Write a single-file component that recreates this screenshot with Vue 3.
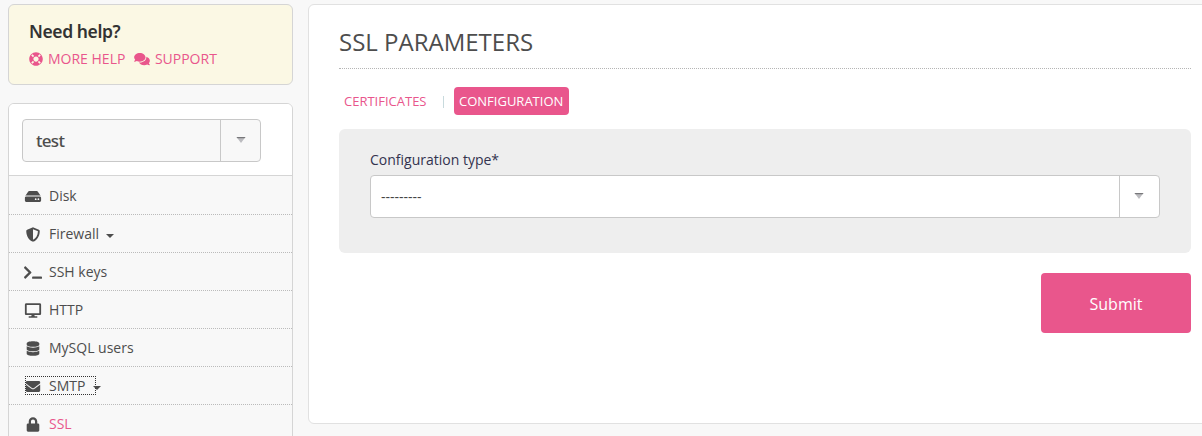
<script setup>
const icons = {
  ring: [512, 'M256 8C119.033 8 8 119.033 8 256s111.033 248 248 248 248-111.033 248-248S392.967 8 256 8zm173.696 119.559l-63.399 63.399c-10.987-18.559-26.67-34.252-45.255-45.255l63.399-63.399a218.396 218.396 0 0 1 45.255 45.255zM256 352c-53.019 0-96-42.981-96-96s42.981-96 96-96 96 42.981 96 96-42.981 96-96 96zM127.559 82.304l63.399 63.399c-18.559 10.987-34.252 26.67-45.255 45.255l-63.399-63.399a218.372 218.372 0 0 1 45.255-45.255zM82.304 384.441l63.399-63.399c10.987 18.559 26.67 34.252 45.255 45.255l-63.399 63.399a218.396 218.396 0 0 1-45.255-45.255zm302.137 45.255l-63.399-63.399c18.559-10.987 34.252-26.67 45.255-45.255l63.399 63.399a218.403 218.403 0 0 1-45.255 45.255z'],
  comments: [576, 'M416 192c0-88.4-93.1-160-208-160S0 103.6 0 192c0 34.3 14.1 65.9 38 92-13.4 30.2-35.5 54.2-35.8 54.5-2.2 2.3-2.8 5.7-1.5 8.7S4.8 352 8 352c36.6 0 66.9-12.3 88.7-25 32.2 15.7 70.3 25 111.3 25 114.9 0 208-71.6 208-160zm122 220c23.9-26 38-57.7 38-92 0-66.9-53.5-124.2-129.3-148.1.9 6.6 1.3 13.3 1.3 20.1 0 105.9-107.7 192-240 192-10.8 0-21.3-.8-31.7-1.9C207.8 439.6 281.8 480 368 480c41 0 79.1-9.2 111.3-25 21.8 12.7 52.1 25 88.7 25 3.2 0 6.1-1.9 7.3-4.8 1.3-2.9.7-6.3-1.5-8.7-.3-.3-22.4-24.2-35.8-54.5z'],
}
const items = [
  { label: 'Disk', w: 576, d: 'M576 304v96c0 26.51-21.49 48-48 48H48c-26.51 0-48-21.49-48-48v-96c0-26.51 21.49-48 48-48h480c26.51 0 48 21.49 48 48zm-48-80a79.557 79.557 0 0 1 30.777 6.165L462.25 85.374A48.003 48.003 0 0 0 422.311 64H153.689a48 48 0 0 0-39.938 21.374L17.223 230.165A79.557 79.557 0 0 1 48 224h480zm-48 96c-17.673 0-32 14.327-32 32s14.327 32 32 32 32-14.327 32-32-14.327-32-32-32zm-96 0c-17.673 0-32 14.327-32 32s14.327 32 32 32 32-14.327 32-32-14.327-32-32-32z' },
  { label: 'Firewall', caret: true, w: 512, d: 'M466.5 83.7l-192-80a48.15 48.15 0 0 0-36.9 0l-192 80C27.7 91.1 16 108.6 16 128c0 198.5 114.5 335.7 221.5 380.3 11.8 4.9 25.1 4.9 36.9 0C360.1 472.6 496 349.3 496 128c0-19.4-11.7-36.9-29.5-44.3zM256.1 446.3l-.1-381 175.9 73.3c-3.3 151.4-82.1 261.1-175.8 307.7z' },
  { label: 'SSH keys', w: 640, d: 'M257.981 272.971L63.638 467.314c-9.373 9.373-24.569 9.373-33.941 0L7.029 444.647c-9.357-9.357-9.375-24.522-.04-33.901L161.011 256 6.99 101.255c-9.335-9.379-9.317-24.544.04-33.901l22.667-22.667c9.373-9.373 24.569-9.373 33.941 0L257.981 239.03c9.373 9.372 9.373 24.568 0 33.941zM640 456v-32c0-13.255-10.745-24-24-24H312c-13.255 0-24 10.745-24 24v32c0 13.255 10.745 24 24 24h304c13.255 0 24-10.745 24-24z' },
  { label: 'HTTP', w: 576, d: 'M528 0H48C21.5 0 0 21.5 0 48v320c0 26.5 21.5 48 48 48h192l-16 48h-72c-13.3 0-24 10.7-24 24s10.7 24 24 24h272c13.3 0 24-10.7 24-24s-10.7-24-24-24h-72l-16-48h192c26.5 0 48-21.5 48-48V48c0-26.5-21.5-48-48-48zm-16 352H64V64h448v288z' },
  { label: 'MySQL users', w: 448, d: 'M448 73.143v45.714C448 159.143 347.667 192 224 192S0 159.143 0 118.857V73.143C0 32.857 100.333 0 224 0s224 32.857 224 73.143zM448 176v102.857C448 319.143 347.667 352 224 352S0 319.143 0 278.857V176c48.125 33.143 136.208 48.572 224 48.572S399.874 209.143 448 176zm0 160v102.857C448 479.143 347.667 512 224 512S0 479.143 0 438.857V336c48.125 33.143 136.208 48.572 224 48.572S399.874 369.143 448 336z' },
  { label: 'SMTP', caret: true, focused: true, w: 512, d: 'M502.3 190.8c3.9-3.1 9.7-.2 9.7 4.7V400c0 26.5-21.5 48-48 48H48c-26.5 0-48-21.5-48-48V195.6c0-5 5.7-7.8 9.7-4.7 22.4 17.4 52.1 39.5 154.1 113.6 21.1 15.4 56.7 47.8 92.2 47.6 35.7.3 72-32.8 92.3-47.6 102-74.1 131.6-96.3 154-113.7zM256 320c23.2.4 56.6-29.2 73.4-41.4 132.7-96.3 142.8-104.7 173.4-128.7 5.8-4.5 9.2-11.5 9.2-18.9v-19c0-26.5-21.5-48-48-48H48c-26.5 0-48 21.5-48 48v19c0 7.4 3.4 14.3 9.2 18.9 30.6 23.9 40.7 32.4 173.4 128.7 16.8 12.2 50.2 41.8 73.4 41.4z' },
  { label: 'SSL', active: true, w: 448, d: 'M400 224h-24v-72C376 68.2 307.8 0 224 0S72 68.2 72 152v72H48c-26.5 0-48 21.5-48 48v192c0 26.5 21.5 48 48 48h352c26.5 0 48-21.5 48-48V272c0-26.5-21.5-48-48-48zm-104 0H152v-72c0-39.7 32.3-72 72-72s72 32.3 72 72v72z' },
]
</script>

<template>
  <div class="page">
    <aside class="side">
      <section class="help">
        <h2>Need help?</h2>
        <div class="links">
          <a><svg width="14" height="14" :viewBox="`0 0 ${icons.ring[0]} 512`"><path :d="icons.ring[1]" /></svg><span>MORE HELP</span></a>
          <a><svg width="16" height="14" :viewBox="`0 0 ${icons.comments[0]} 512`"><path :d="icons.comments[1]" /></svg><span>SUPPORT</span></a>
        </div>
      </section>
      <nav class="menu">
        <div class="site">
          <div class="select small">
            <span class="value">test</span>
            <span class="arrow"><svg width="10" height="6" viewBox="0 0 10 6"><path class="tip" d="M.5 0h9L5 6z" /><path class="lip" d="M.5 0h9L8.5 1.2h-7z" /></svg></span>
          </div>
        </div>
        <div class="items">
          <div v-for="item in items" :key="item.label" class="item">
            <a :class="{ focused: item.focused }">
              <span class="icon"><svg width="18" height="15" :viewBox="`${item.w / 2 - 320} -11 640 533`"><path :d="item.d" /></svg></span>
              <span :class="['label', { active: item.active }]">{{ item.label }}</span>
            </a>
            <i v-if="item.caret" class="caret"></i>
          </div>
        </div>
      </nav>
    </aside>
    <main class="main">
      <h1>SSL PARAMETERS</h1>
      <div class="tabs">
        <a class="tab">CERTIFICATES</a>
        <span class="sep"></span>
        <a class="tab current">CONFIGURATION</a>
      </div>
      <div class="panel">
        <label>Configuration type*</label>
        <div class="select">
          <span class="value">---------</span>
          <span class="arrow"><svg width="10" height="6" viewBox="0 0 10 6"><path class="tip" d="M.5 0h9L5 6z" /><path class="lip" d="M.5 0h9L8.5 1.2h-7z" /></svg></span>
        </div>
      </div>
      <button>Submit</button>
    </main>
  </div>
</template>

<style>
body { margin: 0; background: #f8f8f8; overflow: hidden; }
</style>

<style scoped>
* { box-sizing: border-box; }
.page {
  display: flex; align-items: flex-start; gap: 15px; width: 1222px; height: 436px;
  padding: 4px 0 0 8px; overflow: hidden; background: #f8f8f8; color: #4d4d4d;
  font: 14px/20px "Open Sans", sans-serif;
}
svg { display: block; fill: currentColor; flex: none; }
.side { width: 285px; flex: none; }
.help {
  height: 81px; padding: 16px 20px 0; border: 1px solid #d5d5d5; border-radius: 6px; background: #fbf8e4;
}
h2 { margin: 0; font: 600 17.5px/20px "Noto Sans", sans-serif; letter-spacing: -.4px; color: #333; }
.links { display: flex; gap: 9px; margin-top: 8px; color: #e9568c; }
.links a { display: flex; align-items: center; gap: 5px; }
.links a + a { gap: 4.5px; }
.menu { margin-top: 18px; border: 1px solid #d5d5d5; border-radius: 6px; overflow: hidden; }
.site { height: 72px; padding: 15px 13px; background: #fff; border-bottom: 1px solid #d5d5d5; }
.items { padding-top: 1px; }
.select { display: flex; height: 43px; border: 1px solid #c8c8c8; border-radius: 4px; background: #fff; }
.small { width: 239px; background: #f8f8f8; }
.value { flex: 1; padding-left: 10px; line-height: 42px; }
.small .value { padding-left: 13px; font: 500 17px/42px "Noto Sans", sans-serif; letter-spacing: -.7px; }
.arrow { display: flex; justify-content: center; width: 40px; padding-top: 17px; border-left: 1px solid #c8c8c8; }
.tip { fill: #bcbcc0; }
.lip { fill: #77777a; }
.item { display: flex; align-items: center; height: 38px; padding: 0 0 0 16px; border-bottom: 1px dotted #bbb; }
.item a { display: flex; align-items: center; height: 19px; }
.icon { display: flex; justify-content: center; width: 16px; margin-right: 8px; padding-top: 1px; }
.label { line-height: 20px; }
.active { color: #e9568c; }
.focused { width: 71px; outline: 1px dotted #333; outline-offset: -1px; }
.caret { margin: 4px 0 0 7px; border: 4px solid transparent; border-top-color: #4d4d4d; border-bottom: 0; }
.focused + .caret { margin-left: -3px; }
.main {
  width: 914px; height: 420px; flex: none; padding: 21px 31px 0 30px;
  border: 1px solid #e1e1e1; border-radius: 6px; background: #fff;
}
h1 { width: 852px; height: 43px; margin: 0; border-bottom: 1px dotted #b5b5b5; font-size: 24px; font-weight: 400; line-height: 32px; }
.tabs { display: flex; align-items: center; height: 28px; margin-top: 18px; font-size: 13px; }
.tab { padding: 0 5px; line-height: 28px; color: #e9568c; }
.sep { width: 1px; height: 12px; margin: 2px 10px 0 11.5px; background: #c8dadd; }
.current { width: 115px; border-radius: 4px; background: #e9568c; color: #fff; }
.panel { width: 852px; height: 124px; margin-top: 14px; padding: 21px 31px 0; border-radius: 6px; background: #eee; color: #33334f; }
.panel label { display: block; height: 25px; }
.panel .value { color: #444; }
.panel .arrow { padding-right: 2px; }
button {
  display: block; width: 150px; height: 60px; margin: 20px 0 0 702px; border: 0; border-radius: 4px;
  background: #e9568c; color: #fff; font: 16px/60px "Open Sans", sans-serif; padding: 1px 0 0;
}
</style>
